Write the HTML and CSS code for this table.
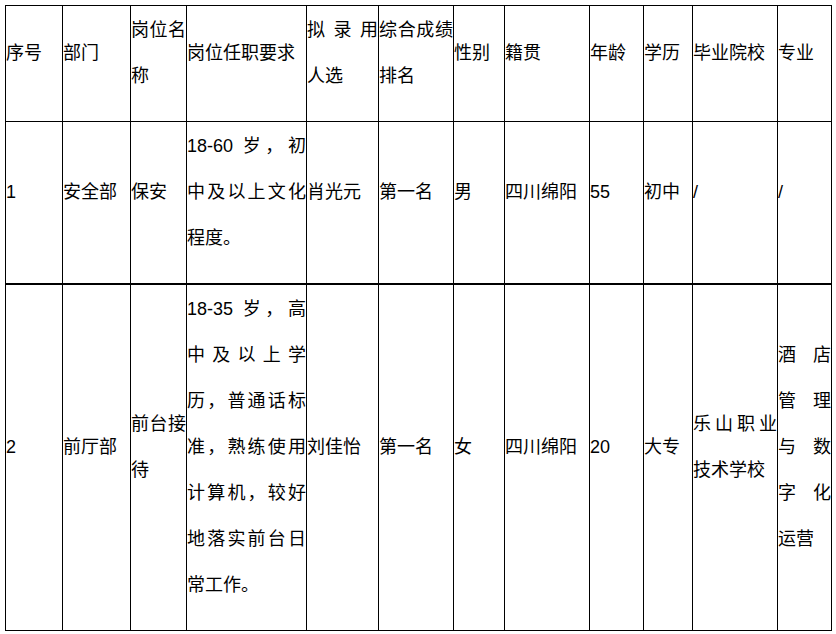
FILE: index.html
```html
<!DOCTYPE html>
<html lang="zh-CN">
<head>
<meta charset="utf-8">
<link rel="stylesheet" href="styles.css">
</head>
<body>
<table class="grid">
  <colgroup>
    <col class="c1"><col class="c2"><col class="c3"><col class="c4"><col class="c5"><col class="c6">
    <col class="c7"><col class="c8"><col class="c9"><col class="c10"><col class="c11"><col class="c12">
  </colgroup>
  <tr class="head">
    <td>序号</td><td>部门</td><td>岗位名称</td><td>岗位任职要求</td><td>拟录用人选</td><td>综合成绩排名</td>
    <td>性别</td><td>籍贯</td><td>年龄</td><td>学历</td><td>毕业院校</td><td>专业</td>
  </tr>
  <tr class="first">
    <td>1</td><td>安全部</td><td>保安</td><td>18-60 岁，初中及以上文化程度。</td><td>肖光元</td><td>第一名</td>
    <td>男</td><td>四川绵阳</td><td>55</td><td>初中</td><td>/</td><td>/</td>
  </tr>
  <tr>
    <td>2</td><td>前厅部</td><td>前台接待</td><td>18-35 岁，高中及以上学历，普通话标准，熟练使用计算机，较好地落实前台日常工作。</td><td>刘佳怡</td><td>第一名</td>
    <td>女</td><td>四川绵阳</td><td>20</td><td>大专</td><td>乐山职业技术学校</td><td>酒店管理与数字化运营</td>
  </tr>
</table>
</body>
</html>
```
FILE: styles.css
```css
html, body {
  margin: 0;
  padding: 0;
  background: #fff;
}
body {
  font-family: "Liberation Sans", "Noto Sans CJK SC", sans-serif;
  font-size: 18px;
  color: #000;
}
.grid {
  margin: 5px 0 0 5px;
  border-collapse: collapse;
  table-layout: fixed;
  width: 826px;
}
.grid td {
  border: 1px solid #000;
  padding: 1px 0 22px 0;
  line-height: 46px;
  vertical-align: middle;
  text-align: justify;
  word-break: normal;
}
.grid tr.first td {
  border-bottom: 2px solid #000;
}
.c1 { width: 57px; }
.c2 { width: 68px; }
.c3 { width: 56px; }
.c4 { width: 120px; }
.c5 { width: 72px; }
.c6 { width: 75px; }
.c7 { width: 51px; }
.c8 { width: 85px; }
.c9 { width: 54px; }
.c10 { width: 49px; }
.c11 { width: 85px; }
.c12 { width: 54px; }
```
